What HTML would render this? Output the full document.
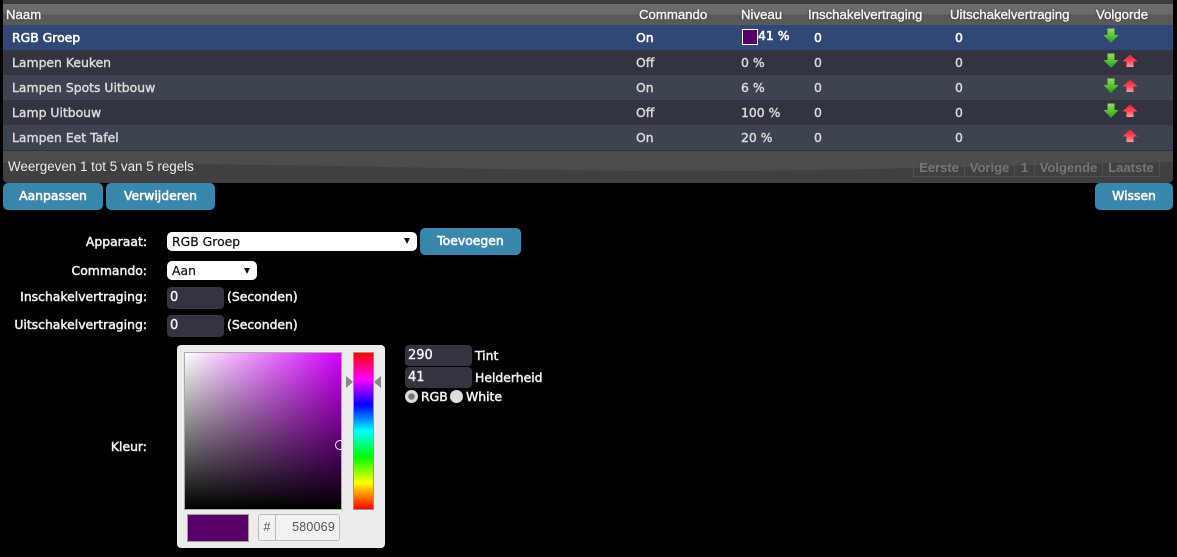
<!DOCTYPE html>
<html><head><meta charset="utf-8"><style>
html,body{margin:0;padding:0;background:#000;width:1177px;height:557px;overflow:hidden}
body{position:relative;font-family:"DejaVu Sans","Liberation Sans",sans-serif;color:#fff}
.a{position:absolute;white-space:nowrap}
#wrap{position:absolute;left:3px;top:0;width:1170px;height:183px;background:#3f3f3f;border-radius:0 0 5px 5px;overflow:hidden}
#hd{position:absolute;left:0;top:4px;width:1170px;height:21px;background:linear-gradient(#6e6e6e 0,#6a6a6a 50%,#595959 50%,#5a5a5a 100%)}
.h{position:absolute;top:7px;font:13.2px/16px "Liberation Sans",sans-serif;color:#f4f4f4;text-shadow:0 0 2px #222;white-space:nowrap;-webkit-text-stroke:.4px #f4f4f4}
.r{position:absolute;left:3px;width:1170px;height:25px}
.t{position:absolute;font-size:12.4px;line-height:16px;color:#dcdcdc;white-space:nowrap;-webkit-text-stroke:.4px currentColor}
.w{color:#fff;-webkit-text-stroke:.55px #fff}
.e{color:#f0f0f0;-webkit-text-stroke:.5px #f0f0f0}
.b{position:absolute;background:#3a87ad;border-radius:5px;color:#fff;font-size:12.4px;-webkit-text-stroke:.55px #fff;text-align:center;white-space:nowrap;height:27px;line-height:26px}
.l{position:absolute;right:1030px;font-size:12.4px;line-height:16px;white-space:nowrap;color:#f0f0f0;-webkit-text-stroke:.5px #f0f0f0}
.i{position:absolute;background:#33343f;border-radius:4px;font-size:13px;color:#f4f4f4;box-sizing:border-box;padding-left:3px;-webkit-text-stroke:.4px #f4f4f4}
.p{position:absolute;top:157px;height:20px;font:bold 13px/20px "Liberation Sans",sans-serif;color:#767676;text-align:center;border:1px solid #505050;box-sizing:border-box}
.s{background:#fff;border-radius:5px;color:#111;font-size:12.4px;line-height:19px;text-indent:5px;height:19px;-webkit-text-stroke:.2px #111}
.ar{width:0;height:0;border:3.5px solid transparent;border-top:6px solid #111;border-bottom:0}
</style></head><body>
<div id="wrap">
<div style="position:absolute;left:0;top:150px;width:1170px;height:33px;background:#4c4c4c"></div>
<svg style="position:absolute;left:0;top:150px" width="1170" height="33"><path d="M0 13C300 13 500 21 680 21S1000 15 1170 12V33H0Z" fill="#404040"/></svg>
<div style="position:absolute;left:0;top:150px;width:1170px;height:1px;background:#333"></div>
<div id="hd"></div>
<div class="h" style="left:3px">Naam</div>
<div class="h" style="left:636px">Commando</div>
<div class="h" style="left:738px">Niveau</div>
<div class="h" style="left:805px">Inschakelvertraging</div>
<div class="h" style="left:947px">Uitschakelvertraging</div>
<div class="h" style="left:1093px">Volgorde</div>
<div style="position:absolute;left:5px;top:158px;font:13.4px/18px 'Liberation Sans',sans-serif;color:#eee;white-space:nowrap">Weergeven 1 tot 5 van 5 regels</div>
<div class="p" style="left:910px;width:52px">Eerste</div>
<div class="p" style="left:961px;width:51px">Vorige</div>
<div class="p" style="left:1011px;width:21px">1</div>
<div class="p" style="left:1031px;width:69px">Volgende</div>
<div class="p" style="left:1099px;width:58px">Laatste</div>
</div>
<div class="r" style="top:25px;background:#314877"></div>
<div class="r" style="top:50px;background:#32343f"></div>
<div class="r" style="top:75px;background:#3e4350"></div>
<div class="r" style="top:100px;background:#32343f"></div>
<div class="r" style="top:125px;background:#3e4350"></div>

<div class="t w" style="left:12px;top:30px">RGB Groep</div>
<div class="t w" style="left:636px;top:30px">On</div>
<div style="position:absolute;left:742px;top:29px;width:14px;height:14px;border:1px solid #fff;background:#580069"></div>
<div class="t w" style="left:758px;top:28px">41 %</div>
<div class="t w" style="left:814px;top:30px">0</div>
<div class="t w" style="left:955px;top:30px">0</div>

<div class="t" style="left:12px;top:55px">Lampen Keuken</div>
<div class="t" style="left:636px;top:55px">Off</div>
<div class="t" style="left:741px;top:55px">0 %</div>
<div class="t" style="left:814px;top:55px">0</div>
<div class="t" style="left:955px;top:55px">0</div>

<div class="t" style="left:12px;top:80px">Lampen Spots Uitbouw</div>
<div class="t" style="left:636px;top:80px">On</div>
<div class="t" style="left:741px;top:80px">6 %</div>
<div class="t" style="left:814px;top:80px">0</div>
<div class="t" style="left:955px;top:80px">0</div>

<div class="t" style="left:12px;top:105px">Lamp Uitbouw</div>
<div class="t" style="left:636px;top:105px">Off</div>
<div class="t" style="left:741px;top:105px">100 %</div>
<div class="t" style="left:814px;top:105px">0</div>
<div class="t" style="left:955px;top:105px">0</div>

<div class="t" style="left:12px;top:130px">Lampen Eet Tafel</div>
<div class="t" style="left:636px;top:130px">On</div>
<div class="t" style="left:741px;top:130px">20 %</div>
<div class="t" style="left:814px;top:130px">0</div>
<div class="t" style="left:955px;top:130px">0</div>

<svg class="a" style="left:0;top:0" width="1177" height="160">
<defs>
<linearGradient id="g" x1="0" y1="0" x2="0" y2="1"><stop offset="0" stop-color="#8fe060"/><stop offset=".55" stop-color="#55c030"/><stop offset="1" stop-color="#2a9a20"/></linearGradient>
<linearGradient id="u" x1="0" y1="0" x2="0" y2="1"><stop offset="0" stop-color="#f02030"/><stop offset=".5" stop-color="#ff4455"/><stop offset="1" stop-color="#ff9aa5"/></linearGradient>
<path id="dn" d="M-3.5 -7.5H3.5V-1H7.5L0 7L-7.5 -1H-3.5Z" fill="url(#g)"/>
<path id="up" d="M0 -6.5L7.5 0.5H3.5V6H-3.5V0.5H-7.5Z" fill="url(#u)"/>
</defs>
<use href="#dn" x="1111" y="36"/>
<use href="#dn" x="1111" y="61"/><use href="#up" x="1130" y="61"/>
<use href="#dn" x="1111" y="86"/><use href="#up" x="1130" y="86"/>
<use href="#dn" x="1111" y="111"/><use href="#up" x="1130" y="111"/>
<use href="#up" x="1130" y="136"/>
</svg>

<div class="b" style="left:3px;top:183px;width:100px">Aanpassen</div>
<div class="b" style="left:106px;top:183px;width:109px">Verwijderen</div>
<div class="b" style="left:1095px;top:183px;width:78px">Wissen</div>
<div class="b" style="left:420px;top:228px;width:101px">Toevoegen</div>

<div class="l" style="top:234px">Apparaat:</div>
<div class="l" style="top:263px">Commando:</div>
<div class="l" style="top:289px">Inschakelvertraging:</div>
<div class="l" style="top:317px">Uitschakelvertraging:</div>
<div class="l" style="top:439px">Kleur:</div>

<div class="a s" style="left:167px;top:232px;width:250px">RGB Groep</div>
<div class="a ar" style="left:404px;top:238px"></div>
<div class="a s" style="left:167px;top:261px;width:90px">Aan</div>
<div class="a ar" style="left:244px;top:268px"></div>

<div class="i" style="left:167px;top:287px;width:57px;height:22px;line-height:22px">0</div>
<div class="i" style="left:167px;top:315px;width:57px;height:22px;line-height:22px">0</div>
<div class="t e" style="left:227px;top:289px">(Seconden)</div>
<div class="t e" style="left:227px;top:317px">(Seconden)</div>

<div class="a" style="left:177px;top:345px;width:208px;height:203px;background:#ececec;border-radius:4px"></div>
<div class="a" style="left:184px;top:352px;width:156px;height:156px;border:1px solid #aaa;background:linear-gradient(transparent,#000),linear-gradient(90deg,#fff,#d400ff)"></div>
<div class="a" style="left:184px;top:352px;width:158px;height:158px;overflow:hidden"><div style="position:absolute;left:151px;top:88px;width:8px;height:8px;border:1px solid #fff;border-radius:50%"></div></div>
<div class="a" style="left:353px;top:352px;width:19px;height:156px;border:1px solid #b08a8a;background:linear-gradient(#f00,#f0f 16.7%,#00f 33.3%,#0ff 50%,#0f0 66.7%,#ff0 83.3%,#f00)"></div>
<div class="a" style="left:346px;top:376px;width:0;height:0;border-left:7px solid #888;border-top:6px solid transparent;border-bottom:6px solid transparent"></div>
<div class="a" style="left:374px;top:376px;width:0;height:0;border-right:7px solid #888;border-top:6px solid transparent;border-bottom:6px solid transparent"></div>
<div class="a" style="left:187px;top:514px;width:60px;height:26px;background:#580069;border:1px solid #999"></div>
<div class="a" style="left:258px;top:514px;width:80px;height:25px;border:1px solid #bbb;border-radius:3px;background:#f2f2f2;font:12.5px/25px 'Liberation Sans',sans-serif;color:#555">
<span style="position:absolute;left:0;top:0;width:16px;height:25px;border-right:1px solid #bbb;text-align:center">#</span>
<span style="position:absolute;right:4px;top:0;letter-spacing:.2px">580069</span></div>

<div class="i" style="left:405px;top:345px;width:67px;height:21px;line-height:21px">290</div>
<div class="i" style="left:405px;top:367px;width:67px;height:21px;line-height:22px">41</div>
<div class="t e" style="left:475px;top:348px">Tint</div>
<div class="t e" style="left:475px;top:370px">Helderheid</div>
<div class="a" style="left:405px;top:390px;width:13px;height:13px;border-radius:50%;background:radial-gradient(circle,#777 0 3px,#ddd 3.5px)"></div>
<div class="t e" style="left:421px;top:389px">RGB</div>
<div class="a" style="left:450px;top:390px;width:13px;height:13px;border-radius:50%;background:#ddd"></div>
<div class="t e" style="left:466px;top:389px">White</div>
</body></html>
